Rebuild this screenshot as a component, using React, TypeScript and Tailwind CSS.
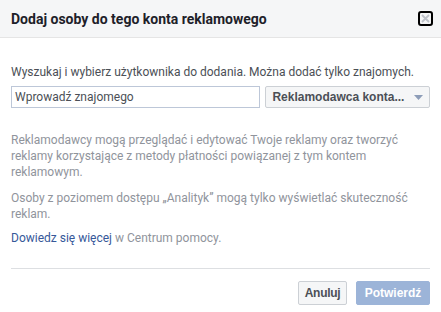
import React from "react";

export default function App() {
  const body = { fontFamily: "Roboto, 'Liberation Sans', sans-serif" };
  const arial = { fontFamily: "'Liberation Sans', Arial, sans-serif" };
  return (
    <div className="w-[441px] h-[312px] bg-white overflow-hidden" style={body}>
      <div className="h-[38px] bg-[#f5f6f7] border-b border-[#e5e5e5] flex items-center justify-between pl-[11px] pr-[8px]">
        <span className="text-[14px] font-bold text-[#1d2129] leading-[18px]">
          Dodaj osoby do tego konta reklamowego
        </span>
        <div className="w-[15px] h-[15px] border-2 border-black rounded-[3px] flex items-center justify-center mb-[1px]">
          <svg width="9" height="9" viewBox="0 0 9 9">
            <path d="M1 1 L8 8 M8 1 L1 8" stroke="#bec2c9" strokeWidth="1.8" />
          </svg>
        </div>
      </div>
      <div className="px-[11px] pt-[26px]">
        <div className="text-[12px] leading-[16px] text-[#4b4f56]">
          Wyszukaj i wybierz użytkownika do dodania. Można dodać tylko znajomych.
        </div>
        <div className="flex mt-[6px] gap-[5px]">
          <div className="w-[250px] h-[22px] border border-[#bdc7d8] flex items-center pl-[3px] text-[12px] text-[#4b4f56]">
            Wprowadź znajomego
          </div>
          <div className="w-[165px] h-[22px] bg-[#f5f6f7] border border-[#ccd0d5] rounded-[2px] flex items-center justify-between pl-[6px] pr-[6px]">
            <span className="text-[12px] font-bold text-[#4b4f56]" style={arial}>
              Reklamodawca konta...
            </span>
            <svg width="9" height="5" viewBox="0 0 9 5">
              <path d="M0 0 L9 0 L4.5 5 Z" fill="#8d9db8" />
            </svg>
          </div>
        </div>
        <p className="mt-[24px] text-[12px] leading-[16px] text-[#90949c] w-[400px]">
          Reklamodawcy mogą przeglądać i edytować Twoje reklamy oraz tworzyć reklamy korzystające z metody płatności powiązanej z tym kontem reklamowym.
        </p>
        <p className="mt-[10px] text-[12px] leading-[16px] text-[#90949c] w-[410px]">
          Osoby z poziomem dostępu „Analityk” mogą tylko wyświetlać skuteczność reklam.
        </p>
        <p className="mt-[8px] text-[12px] leading-[16px] text-[#90949c]">
          <span className="text-[#365899]">Dowiedz się więcej</span> w Centrum pomocy.
        </p>
        <div className="mt-[22px] border-t border-[#dddfe2]" />
        <div className="flex justify-end gap-[9px] mt-[12px]">
          <div className="w-[49px] h-[24px] bg-[#f5f6f7] border border-[#ccd0d5] rounded-[2px] flex items-center justify-center text-[12px] font-bold text-[#4b4f56] tracking-[-0.3px]" style={arial}>
            Anuluj
          </div>
          <div className="w-[74px] h-[24px] bg-[#9cb4d8] border border-[#9cb4d8] rounded-[2px] flex items-center justify-center text-[12px] font-bold text-white" style={arial}>
            Potwierdź
          </div>
        </div>
      </div>
    </div>
  );
}
